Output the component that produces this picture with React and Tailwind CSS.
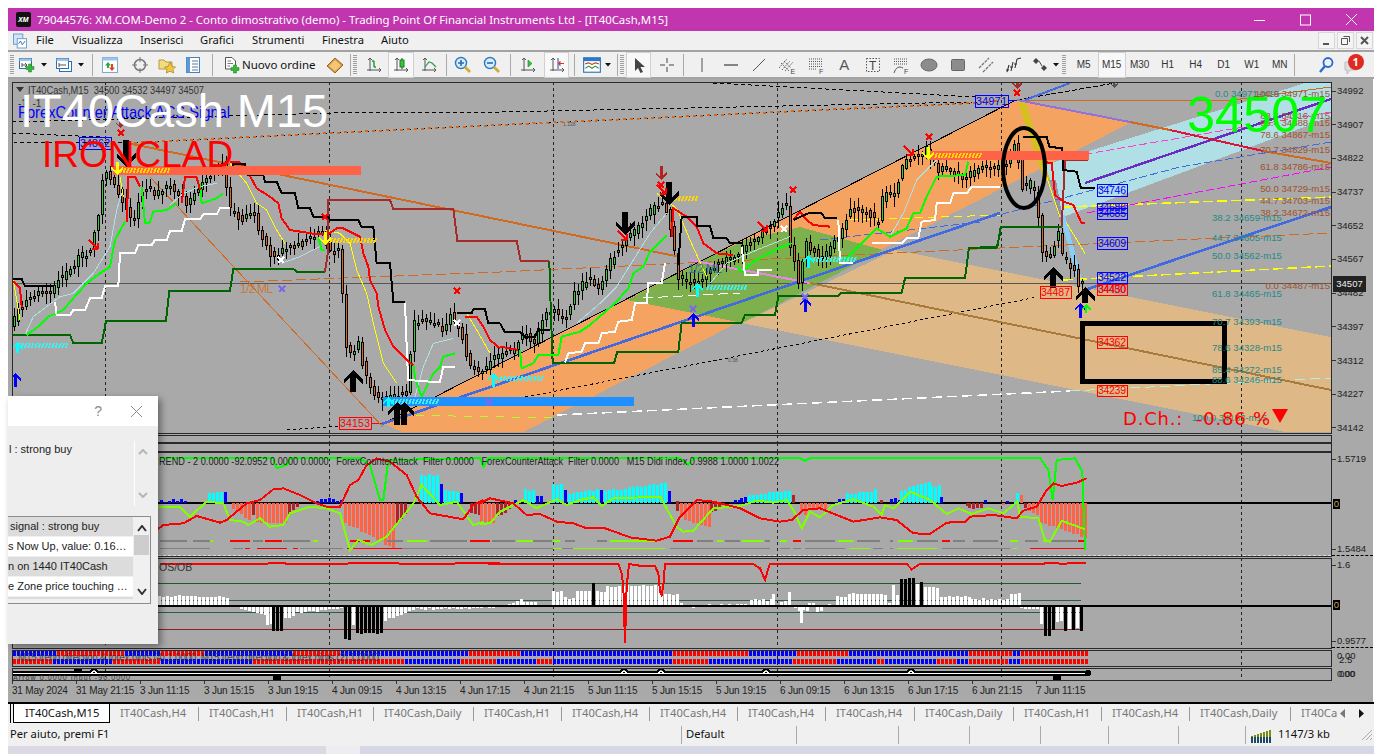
const rnd = (i) => {
  const v = Math.sin(i * 12.9898) * 43758.5453;
  return v - Math.floor(v);
};

// zoomed crop coordinates -> screen coordinates
const pts = (s, dx, dy) =>
  s.trim().split(/\s+/).map((p) => {
    const [x, y] = p.split(',');
    return [+x / 3 + dx, +y / 3 + dy];
  });
const z7 = (s) => pts(s, 0, 80);
const z8 = (s) => pts(s, 500, 80);
const z6 = (s) => pts(s, 980, 80);
const z3 = (s) => pts(s, 0, 390);
const z9 = (s) => pts(s, 480, 440);
const z10 = (s) => pts(s, 930, 440);
const str = (a) => a.map((p) => p.join(',')).join(' ');

const price = [
  [14, 330], [20, 313], [33, 297], [43, 293], [55, 290], [62, 280], [73, 270], [83, 257], [93, 252], [102, 213], [107, 170],
  [115, 180], [127, 203], [137, 220], [147, 187], [160, 193], [173, 183], [190, 203], [210, 180], [227, 160], [232, 207],
  [245, 220], [257, 213], [267, 243], [277, 260], [290, 247], [307, 243], [325, 230], [333, 250], [345, 253], [347, 340],
  [353, 357], [362, 343], [367, 367], [380, 400], [397, 397], [410, 393], [417, 323], [433, 320], [447, 330], [453, 313],
  [467, 340], [473, 367], [487, 370], [497, 357], [520, 350], [525, 330], [537, 343], [552, 310], [570, 317], [578, 293],
  [593, 277], [603, 287], [613, 263], [622, 250], [633, 233], [643, 227], [657, 207], [667, 203], [673, 220], [682, 277],
  [693, 283], [707, 277], [722, 262], [737, 257], [753, 243], [773, 227], [790, 203], [793, 240], [802, 280], [810, 243],
  [825, 260], [840, 240], [853, 210], [870, 210], [882, 223], [887, 193], [897, 197], [902, 180], [908, 160], [920, 157],
  [930, 150], [942, 170], [953, 170], [968, 180], [980, 170], [1000, 167], [1010, 163], [1020, 140], [1025, 187], [1037, 183],
  [1042, 217], [1045, 253], [1053, 257], [1062, 233], [1065, 253], [1077, 270], [1082, 283], [1088, 283],
];
const priceAt = (x) => {
  for (let i = 1; i < price.length; i++) {
    if (x <= price[i][0]) {
      const [a, b] = [price[i - 1], price[i]];
      return a[1] + ((b[1] - a[1]) * (x - a[0])) / (b[0] - a[0]);
    }
  }
  return 283;
};

const GRID = [105, 329, 553, 777, 1001, 1241];

const SANS = { fontFamily: '"Liberation Sans", Arial, sans-serif' };

function Line({ p, c, w = 1, d }) {
  return <polyline points={typeof p === 'string' ? p : str(p)} fill="none" stroke={c} strokeWidth={w} strokeDasharray={d} />;
}

function Plot({ y0, h, bg, children }) {
  return (
    <div className="h-full w-[1320px] shrink-0 border border-[#2a2a2a]">
      <svg className="block h-full w-full" viewBox={`13 ${y0 + 1} 1318 ${h - 2}`} preserveAspectRatio="none" shapeRendering="crispEdges" style={SANS}>
        {bg}
        {GRID.map((x) => (
          <line key={x} x1={x} x2={x} y1={y0} y2={y0 + h} stroke="#222" strokeDasharray="3 3" />
        ))}
        {children}
      </svg>
    </div>
  );
}

function Candles() {
  const out = [];
  for (let i = 0; i < 268; i++) {
    const x = 14 + 4 * i;
    const o = priceAt(x) + (rnd(i) - 0.5) * 7;
    const c = priceAt(x + 4) + (rnd(i + 300) - 0.5) * 7;
    const t = Math.min(o, c) - 2 - rnd(i + 600) * 9;
    const b = Math.max(o, c) + 2 + rnd(i + 900) * 9;
    out.push(
      <g key={i}>
        <line x1={x} x2={x} y1={t} y2={b} stroke="#000" />
        <rect x={x - 1} y={Math.min(o, c)} width="2" height={Math.max(2, Math.abs(o - c))} fill={c < o ? '#32cd32' : '#d2691e'} stroke="#000" />
      </g>
    );
  }
  return <g>{out}</g>;
}

function Arrow({ x, y, h, w, st, c, down }) {
  const s = down ? -1 : 1;
  const y0 = down ? y + h : y;
  const P = (dx, dy) => `${x + dx},${y0 + s * dy}`;
  const d = [
    P(0, 0), P(w / 2, w / 2), P(w / 2, w * 0.72), P(st / 2, w * 0.38), P(st / 2, h),
    P(-st / 2, h), P(-st / 2, w * 0.38), P(-w / 2, w * 0.72), P(-w / 2, w / 2),
  ].join(' ');
  return <polygon points={d} fill={c} />;
}

function Cross({ x, y, c, s = 3 }) {
  return <path d={`M${x - s} ${y - s}L${x + s} ${y + s}M${x + s} ${y - s}L${x - s} ${y + s}`} stroke={c} strokeWidth="2" fill="none" />;
}

function RedHit({ x, y }) {
  return <path d={`M${x - 9} ${y - 9}L${x} ${y}M${x} ${y}L${x} ${y - 6}M${x} ${y}L${x - 6} ${y}`} stroke="#f00" strokeWidth="1.6" fill="none" />;
}

function Hatch({ x1, x2, y, h, c }) {
  let d = '';
  for (let x = x1; x < x2; x += 3.4) d += `M${x} ${y + h}L${x + 2} ${y}`;
  return <path d={d} stroke={c} strokeWidth="1.7" fill="none" />;
}

function Box({ x, y, w, h, c, t }) {
  return (
    <g>
      <rect x={x} y={y} width={w} height={h} fill="none" stroke={c} />
      <text x={x + w / 2} y={y + h - 2} fontSize="10.5" fill={c} textAnchor="middle" textLength={w - 2} shapeRendering="auto">{t}</text>
    </g>
  );
}

const TEAL = [
  ['0.0 34971-m15', 1215, 97], ['38.2 34659-m15', 1212, 221], ['44.7 34605-m15', 1212, 241], ['50.0 34562-m15', 1212, 259],
  ['61.8 34465-m15', 1212, 297], ['70.7 34393-m15', 1212, 325], ['78.6 34328-m15', 1212, 351], ['85.4 34272-m15', 1212, 373],
  ['88.6 34246-m15', 1212, 383], ['100.0 34153-m15', 1192, 421],
];
const SIENNA = [
  ['100.0 34971-m15', 97], ['88.6 34916-m15', 119], ['85.4 34888-m15', 126], ['78.6 34867-m15', 138], ['70.7 34829-m15', 153],
  ['61.8 34786-m15', 170], ['50.0 34729-m15', 192], ['44.7 34703-m15', 204], ['38.2 34672-m15', 216], ['0.0 34487-m15', 289],
];

function MainChart() {
  const bg = (
    <g>
      <polygon points="1017,100 1132,122 523,432 402,432 382,423" fill="#f4a460" />
      <polygon points="895,250 1331,337 1331,432 1285,432 742,323" fill="#deb887" />
      <polygon points="627,300 700,262 745,240 800,227 883,250 742,323" fill="#7fb04e" />
      <polygon points="1305,83 1331,83 1331,117 1063,217 1045,165" fill="#b0e0e6" />
      <polygon points="1017,100 1025,100 1050,180 1044,180" fill="#d4c020" />
      <polygon points="1050,180 1056,180 1063,220 1060,222" fill="#9a8ea0" />
      <polygon points="1060,215 1065,215 1083,283 1078,283" fill="#87cefa" />
    </g>
  );
  return (
    <Plot y0={82} h={352} bg={bg}>
      <line x1="13" x2="1331" y1="283" y2="283" stroke="#555" />
      {/* dashed price lines */}
      <Line p="12,122 333,113 500,112 973,102" c="#000" d="4 3" />
      <Line p="713,83 977,97" c="#000" d="4 3" />
      <Line p="12,133 100,137" c="#000" d="4 3" />
      <Line p="13,142 127,143" c="#000" d="4 3" />
      <Line p="127,143 333,133 500,125 973,103 1000,101" c="#000" d="4 3" />
      <Line p="127,143 333,133 500,125 973,103 1000,101" c="#d2691e" d="3 4" w="2" />
      <Line p="287,430 339,426" c="#000" d="3 3" />
      <Line p="371,423 382,423" c="#f00" />
      <Line p="525,397 733,357 1037,297" c="#000" d="3 3" />
      <Line p="1017,100 1115,83" c="#000" d="5 2" />
      <Line p="1017,100 1233,100 1331,87" c="#d2691e" />
      <Line p="557,415 1070,391" c="#fff" d="10 5" w="1.5" />
      <Line p="1070,391 1331,378" c="#b0f0e0" d="10 5" />
      <Line p="400,415 557,418" c="#adff2f" d="8 8" />
      <Line p="643,298 740,293" c="#fff" d="10 5" />
      <Line p="240,282 500,272 1000,248 1331,233" c="#d2691e" d="10 4" />
      <Line p="1063,207 1331,197" c="#ffff00" d="10 4" w="1.5" />
      <Line p="1063,280 1331,266" c="#ffff00" d="10 4" w="1.5" />
      <Line p="1087,213 1331,167" c="#ff00ff" d="8 3" />
      <Line p="1063,158 1331,112" c="#ff40c0" d="8 3" />
      <Line p="980,220 1180,167 1331,142" c="#4169e1" d="8 3" />
      <Line p="820,240 980,222" c="#4169e1" d="8 3" />
      <Line p="850,220 1000,215" c="#ffff00" d="8 5" />
      {/* channels */}
      <Line p="382,424 1016,100" c="#000" />
      <Line p="150,177 383,427" c="#d2691e" />
      <Line p="382,424 1000,213" c="#4169e1" w="2.6" />
      <Line p="1025,100 1070,83" c="#4169e1" w="2" />
      <Line p="1085,290 1331,207" c="#4169e1" w="2.6" />
      <Line p="1085,183 1331,99" c="#6a2cc0" w="2.4" />
      <Line p="1017,100 1130,122" c="#9370db" w="2" />
      <Line p="1130,122 1170,130" c="#d2691e" w="2" />
      <Line p="1170,130 1263,151" c="#dc143c" w="2" />
      <Line p="1263,151 1331,163" c="#d2691e" w="2" />
      <Line p="127,143 680,257" c="#d2691e" w="2" />
      <Line p="690,260 810,283" c="#ee82ee" w="2" />
      <Line p="810,283 1331,390" c="#a87a3c" w="2" />

      <Candles />

      {/* thin moving averages */}
      <Line p={z7('40,600 50,660 60,720')} c="#ffff00" />
      <Line p={z7('360,290 370,350')} c="#ffff00" />
      <Line p={z7('690,250 740,310 770,370 800,390 830,450 855,490')} c="#ffff00" />
      <Line p={z7('975,450 1020,460 1050,490 1070,570 1100,640 1120,730 1150,850 1190,910')} c="#ffff00" />
      <Line p={z7('1400,700 1430,750 1470,820')} c="#ffff00" />
      <Line p={z8('470,340 530,385 570,480 620,590')} c="#ffff00" />
      <Line p={z6('200,290 240,410')} c="#ffff00" />
      <Line p={z6('260,430 315,520')} c="#ffff00" />
      <Line p={z7('75,765 100,710 140,680 180,650 220,640 280,580 330,500 350,390 365,340')} c="#b0e0e6" />
      <Line p={z7('510,375 550,340 600,320 650,310')} c="#b0e0e6" />
      <Line p={z7('845,550 900,530 960,500')} c="#b0e0e6" />
      <Line p={z7('1245,950 1270,860 1300,790 1360,775')} c="#b0e0e6" />
      <Line p={z8('230,730 300,670 350,620 400,540 450,460 500,400')} c="#b0e0e6" />
      <Line p={z8('630,610 680,550 770,510 870,470')} c="#b0e0e6" />
      <Line p={z8('1170,470 1210,400 1250,300 1310,240')} c="#b0e0e6" />

      {/* step lines */}
      <Line p={z7('40,765 210,765 220,790 305,790 318,723 498,723 508,632 690,632 700,567 880,567 890,575 975,575')} c="#006400" w="2" />
      <Line p={z8('148,543 150,620 158,850 342,850 352,815 535,815 545,728 725,728 735,705 825,705 835,648 1015,648 1025,638 1205,638 1215,595 1395,595 1407,503 1490,503 1500,460')} c="#006400" w="2" />
      <Line p={z6('0,500 52,500 62,440 245,440')} c="#006400" w="2" />
      <Line p={z7('975,575 985,510 985,360 1170,360 1180,387 1360,387 1372,482 1500,482')} c="#a52a2a" w="2" />
      <Line p={z8('0,482 50,482 62,543 148,543')} c="#a52a2a" w="2" />
      <Line p={z6('245,440 255,240 325,240')} c="#a52a2a" w="2" />
      <Line p={z7('80,765 115,740 145,710 190,690 220,655 260,610 300,580 330,560 345,480 375,425')} c="#00ff00" w="2" />
      <Line p={z7('425,320 435,430 448,430 460,395 500,390 530,370')} c="#00ff00" w="2" />
      <Line p={z7('600,310 605,370 650,355 670,340')} c="#00ff00" w="2" />
      <Line p={z7('955,470 965,510 975,510')} c="#00ff00" w="2" />
      <Line p={z7('1240,855 1245,895 1265,950 1280,920 1300,880 1320,860 1330,830 1365,820')} c="#00ff00" w="2" />
      <Line p={z8('60,810 65,865 100,850 115,825 175,825 185,770 240,755 270,735 310,700 345,670 385,625 400,580 430,560 450,515 500,465')} c="#00ff00" w="2" />
      <Line p={z8('710,560 725,575 760,545 835,505 875,490')} c="#00ff00" w="2" />
      <Line p={z8('1030,545 1085,490 1130,445 1170,470 1220,445 1240,400 1260,400 1280,350 1310,290 1395,285 1405,245')} c="#00ff00" w="2" />
      <Line p={z7('165,665 170,705 210,705 220,690 255,690 270,655 305,655 315,618 355,618 360,520 405,520 415,495 455,495 465,480 500,480 510,453 545,453 555,418 600,418 610,403 650,403 660,385 690,385')} c="#fff" w="2" />
      <Line p={z7('1215,668 1222,850 1225,900 1290,905 1320,905 1330,860 1365,860')} c="#fff" w="2" />
      <Line p={z8('195,848 205,820 245,815 255,790 295,790 305,760 345,755 355,725 395,720 405,670 440,670 445,610 485,610 495,550')} c="#fff" w="2" />
      <Line p={z8('725,500 735,585 775,585 775,570 815,570')} c="#fff" w="2" />
      <Line p={z8('1015,420 1020,550 1060,550')} c="#fff" w="2" />
      <Line p={z8('1115,490 1205,490 1220,475 1255,475 1265,425 1305,420 1310,370 1350,370 1360,340 1400,340 1415,320 1500,320')} c="#fff" w="2" />
      <Line p={z6('0,320 55,320')} c="#fff" w="2" />
      <Line p={z7('40,605 60,625 65,680')} c="#f00" w="2" />
      <Line p={z7('380,425 385,290 405,290 420,320')} c="#f00" w="2" />
      <Line p={z7('545,370 555,292 590,292 600,330')} c="#f00" w="2" />
      <Line p={z7('690,245 715,245 740,270 770,325 810,350 835,370 845,415 870,450 945,462 985,462 1010,445 1030,445 1080,470 1090,520 1105,560 1110,600 1130,640 1135,680 1155,750 1180,800 1225,845 1240,855')} c="#f00" w="2" />
      <Line p={z7('1395,710 1430,710 1450,740 1470,780 1500,805')} c="#f00" w="2" />
      <Line p={z8('0,800 55,810')} c="#f00" w="2" />
      <Line p={z8('515,470 520,385 560,410 590,440 610,490 650,520 700,525')} c="#f00" w="2" />
      <Line p={z8('880,420 900,395 920,420 940,435 990,440')} c="#f00" w="2" />
      <Line p={z6('190,245 215,250 225,345 250,365 280,375 305,430 315,430')} c="#f00" w="2" />
      <Line p={z7('40,597 65,597 75,618 160,618')} c="#000" w="2" />
      <Line p={z7('690,280 700,252 735,252 745,285 790,285 795,305 830,305 845,340 885,340 895,385 930,385 940,410 985,410 990,420 1075,420 1085,442 1120,442 1130,550 1170,550 1180,665 1215,665')} c="#000" w="2" />
      <Line p={z7('1370,700 1415,700 1420,688 1455,688 1465,730 1500,730')} c="#000" w="2" />
      <Line p={z8('0,730 15,757 60,757 75,770 105,770 115,750 150,750')} c="#000" w="2" />
      <Line p={z8('535,555 545,410 590,410 590,438 630,438 640,475 680,475 690,490 725,490')} c="#000" w="2" />
      <Line p={z8('880,420 925,400 965,400 975,415 1010,415')} c="#000" w="2" />
      <Line p={z6('130,170 200,170 208,200 245,205 250,270 290,275 303,325 345,325')} c="#000" w="2" />

      {/* signal bars */}
      <rect x="113" y="166" width="248" height="9" fill="#ff6347" />
      <rect x="927" y="151" width="162" height="9" fill="#ff6347" />
      <rect x="383" y="397" width="251" height="9" fill="#1e90ff" />
      <Hatch x1={120} x2={168} y={168} h={5} c="#ffd700" />
      <Hatch x1={935} x2={980} y={153} h={5} c="#ffd700" />
      <Hatch x1={330} x2={376} y={238} h={5} c="#ffd700" />
      <Hatch x1={675} x2={697} y={196} h={5} c="#ffd700" />
      <Hatch x1={18} x2={68} y={343} h={5} c="#40f0f0" />
      <Hatch x1={392} x2={438} y={399} h={5} c="#40f0f0" />
      <Hatch x1={500} x2={543} y={376} h={5} c="#40f0f0" />
      <Hatch x1={707} x2={747} y={285} h={5} c="#40f0f0" />
      <Hatch x1={813} x2={857} y={257} h={5} c="#40f0f0" />

      {/* arrows and marks */}
      <Arrow x={353} y={370} h={22} w={19} st={6} c="#000" />
      <Arrow x={397} y={402} h={23} w={19} st={6} c="#000" />
      <Arrow x={404} y={402} h={23} w={19} st={6} c="#000" />
      <Arrow x={1053} y={267} h={21} w={19} st={6} c="#000" />
      <Arrow x={1085} y={287} h={16} w={19} st={6} c="#000" />
      <Arrow x={126} y={140} h={27} w={19} st={6} c="#000" down />
      <Arrow x={625} y={212} h={23} w={19} st={6} c="#000" down />
      <Arrow x={669} y={182} h={23} w={19} st={6} c="#000" down />
      <Arrow x={693} y={313} h={14} w={11} st={3} c="#0000ff" />
      <Arrow x={805} y={298} h={14} w={11} st={3} c="#0000ff" />
      <Arrow x={15} y={373} h={14} w={11} st={3} c="#0000ff" />
      <Arrow x={1080} y={303} h={15} w={11} st={3} c="#0000ff" />
      <Arrow x={1086} y={304} h={9} w={9} st={2} c="#00ff00" />
      <Arrow x={17} y={342} h={11} w={11} st={3} c="#00ffff" />
      <Arrow x={388} y={397} h={10} w={11} st={3} c="#00ffff" />
      <Arrow x={493} y={373} h={14} w={11} st={3} c="#00ffff" />
      <Arrow x={697} y={283} h={14} w={11} st={3} c="#00ffff" />
      <Arrow x={808} y={255} h={13} w={11} st={3} c="#00ffff" />
      <Arrow x={117} y={162} h={13} w={12} st={3} c="#ffff00" down />
      <Arrow x={325} y={232} h={13} w={12} st={3} c="#ffff00" down />
      <Arrow x={928} y={147} h={13} w={12} st={3} c="#ffff00" down />
      <Arrow x={661} y={166} h={14} w={11} st={3} c="#b22222" down />
      <Arrow x={120} y={120} h={8} w={8} st={3} c="#a52a2a" down />
      <Arrow x={1017} y={83} h={6} w={10} st={3} c="#a52a2a" down />
      <Arrow x={1114} y={83} h={5} w={8} st={2} c="#555" down />
      <Cross x={121} y={133} c="#f00" />
      <Cross x={325} y={217} c="#f00" />
      <Cross x={457} y={291} c="#f00" />
      <Cross x={661} y={185} c="#f00" />
      <Cross x={793} y={190} c="#f00" />
      <Cross x={929} y={137} c="#f00" />
      <Cross x={1017} y={93} c="#f00" />
      <Cross x={281} y={260} c="#fff" />
      <Cross x={457} y={323} c="#fff" />
      <Cross x={784} y={229} c="#fff" />
      <Cross x={282} y={289} c="#7b68ee" />
      <Cross x={489} y={402} c="#7b68ee" />
      <Cross x={693} y={309} c="#7b68ee" />
      <Cross x={805} y={297} c="#7b68ee" />
      <RedHit x={98} y={249} />
      <RedHit x={627} y={240} />
      <RedHit x={666} y={194} />
      <RedHit x={767} y={231} />
      <RedHit x={913} y={155} />

      <ellipse cx="1024" cy="168" rx="21" ry="40" fill="none" stroke="#000" strokeWidth="4" shapeRendering="auto" />
      <rect x="1082.5" y="323.5" width="142" height="58" fill="none" stroke="#000" strokeWidth="5" />

      <Box x={79} y={137} w={32} h={12} c="#0000ff" t="34862" />
      <Box x={975} y={95} w={33} h={12} c="#0000ff" t="34971" />
      <line x1="1008" x2="1017" y1="100" y2="100" stroke="#0000ff" />
      <Box x={1097} y={184} w={30} h={12} c="#0000ff" t="34746" />
      <Box x={1097} y={203} w={30} h={10} c="#0000ff" t="34686" />
      <Box x={1097} y={208} w={30} h={11} c="#0000ff" t="34685" />
      <Box x={1097} y={237} w={30} h={12} c="#0000ff" t="34609" />
      <Box x={1097} y={272} w={30} h={11} c="#0000ff" t="34522" />
      <Box x={1040} y={286} w={31} h={12} c="#f00" t="34487" />
      <Box x={1097} y={284} w={30} h={11} c="#f00" t="34450" />
      <Box x={1097} y={284} w={30} h={11} c="#f00" t="34430" />
      <Box x={1097} y={336} w={30} h={12} c="#f00" t="34362" />
      <Box x={1097} y={385} w={30} h={11} c="#f00" t="34239" />
      <Box x={339} y={417} w={32} h={12} c="#f00" t="34153" />

      <g shapeRendering="auto">
        {TEAL.map(([t, x, y]) => (
          <text key={t} x={x} y={y} fontSize="9.6" fill="#1f8a8a">{t}</text>
        ))}
        {SIENNA.map(([t, y]) => (
          <text key={t} x={1330} y={y} fontSize="9.6" fill="#a0522d" textAnchor="end">{t}</text>
        ))}
        <text x="240" y="293" fontSize="12" fill="#c87a3c" textLength="33">1/2 ML</text>
        <text x="688" y="273" fontSize="12" fill="#3a6a9a" textLength="34">1/2 ML</text>
        <text x="563" y="126" fontSize="5" fill="#555">1.128</text>
        <text x="728" y="362" fontSize="5" fill="#555">0.38</text>
        <polygon points="16,87 24,87 20,92" fill="#333" />
        <text x="28" y="94" fontSize="10" fill="#333" textLength="176" lengthAdjust="spacingAndGlyphs" xmlSpace="preserve">IT40Cash,M15  34500 34532 34497 34507</text>
        <text x="18" y="107" fontSize="10" fill="#333" xmlSpace="preserve">-1  -1</text>
        <text x="18" y="118" fontSize="17" fill="#0000ff" textLength="212" lengthAdjust="spacingAndGlyphs">ForexCounter Attack ACS Signal</text>
        <text x="20" y="127" fontSize="47" fill="#fff">IT40Cash M15</text>
        <text x="42" y="167" fontSize="37" fill="#f00">IRONCLAD</text>
        <text x="1187" y="132" fontSize="50.5" fill="#00ff00">34507</text>
        <text x="1123" y="425" fontSize="18" fill="#f00" textLength="147" xmlSpace="preserve" style={{ fontFamily: '"DejaVu Sans", sans-serif' }}>D.Ch.:  -0.86 %</text>
        <polygon points="1272,409 1288,409 1280,423" fill="#f00" />
      </g>
    </Plot>
  );
}

const HIST = [
  [160, 170, 2, 2, '#0000ff'], [172, 186, 3, 3, '#0000ff'], [208, 224, 9, 11, '#00ffff'], [224, 228, 11, 11, '#0000ff'],
  [232, 252, -6, -20, '#ff6347'], [252, 256, -12, -12, '#b22222'], [256, 288, -20, -20, '#ff6347'], [288, 300, -10, -3, '#b22222'],
  [316, 332, 3, 5, '#0000ff'], [332, 342, 3, 2, '#0000ff'], [344, 396, -20, -47, '#ff6347'], [396, 408, -20, -6, '#b22222'],
  [420, 440, 28, 28, '#00ffff'], [440, 444, 20, 20, '#0000ff'], [444, 460, 12, 12, '#00ffff'], [460, 464, 10, 10, '#0000ff'],
  [470, 480, -10, -12, '#b22222'], [480, 496, -20, -20, '#ff6347'], [496, 512, -14, -5, '#b22222'], [514, 522, 2, 4, '#0000ff'],
  [524, 534, 13, 14, '#00ffff'], [536, 542, 7, 7, '#0000ff'], [552, 564, 18, 18, '#00ffff'], [564, 568, 12, 12, '#0000ff'],
  [568, 600, 10, 14, '#00ffff'], [600, 604, 13, 13, '#0000ff'], [604, 668, 12, 20, '#00ffff'], [668, 672, 12, 12, '#0000ff'],
  [676, 680, 2, 2, '#b22222'], [676, 680, -8, -8, '#b22222'], [680, 710, -15, -26, '#ff6347'], [710, 720, -10, -4, '#b22222'],
  [726, 740, 1, 3, '#0000ff'], [740, 748, 4, 6, '#0000ff'], [748, 790, 8, 13, '#00ffff'], [792, 796, 8, 8, '#b22222'],
  [800, 808, -6, -18, '#ff6347'], [808, 826, -4, -6, '#ff6347'], [834, 846, 2, 5, '#0000ff'], [846, 876, 9, 13, '#00ffff'],
  [880, 884, 3, 3, '#b22222'], [890, 900, 4, 4, '#0000ff'], [900, 930, 12, 22, '#00ffff'], [930, 940, 17, 17, '#00ffff'],
  [940, 944, 6, 6, '#0000ff'], [966, 970, -3, -3, '#b22222'], [968, 982, -5, -5, '#b22222'], [984, 988, 3, 3, '#0000ff'],
  [1002, 1004, -1, -1, '#ff6347'], [1006, 1010, 2, 2, '#0000ff'], [1014, 1016, 3, 3, '#00ffff'], [1016, 1020, 10, 10, '#00ffff'],
  [1020, 1024, 7, 7, '#ff6347'], [1024, 1028, -5, -5, '#b22222'], [1028, 1040, -8, -14, '#ff6347'], [1040, 1088, -20, -36, '#ff6347'],
];

function Histogram({ data, zero, w = 3 }) {
  const out = [];
  data.forEach(([a, b, h1, h2, c], n) => {
    for (let x = a; x < b; x += 4) {
      const h = h1 + ((h2 - h1) * (x - a)) / Math.max(1, b - a) + (rnd(x) - 0.5) * 2;
      out.push(<rect key={`${n}-${x}`} x={x} y={h > 0 ? zero - h : zero} width={w} height={Math.abs(h)} fill={c} />);
    }
  });
  return <g>{out}</g>;
}

const dashes = (y, list) =>
  list.map(([a, b, c], i) => <rect key={`${y}-${i}`} x={a} y={y} width={b - a} height="1.6" fill={c} />);

const GR = '#808080';
const LI = '#7fff00';
const RE = '#f00';
const ROW1 = [
  [160, 187, GR], [193, 210, GR], [210, 213, LI], [230, 250, RE], [253, 263, GR], [265, 282, RE], [283, 310, GR], [313, 318, LI],
  [350, 370, RE], [387, 403, GR], [407, 427, LI], [430, 467, GR], [470, 490, RE], [492, 515, GR], [517, 533, LI], [533, 552, GR],
  [553, 560, LI], [565, 575, GR], [597, 607, GR], [610, 657, LI], [673, 693, RE], [697, 713, GR], [717, 723, LI], [725, 740, GR],
  [742, 763, LI], [765, 770, GR], [780, 787, LI], [793, 801, RE], [805, 835, GR], [838, 853, LI], [857, 880, GR], [890, 893, GR],
  [898, 913, LI], [917, 930, GR], [930, 938, GR], [942, 950, RE], [953, 965, GR], [973, 998, GR], [1010, 1018, LI], [1025, 1038, GR],
  [1043, 1050, LI], [1050, 1077, GR], [1078, 1086, RE],
];
const ROW2 = [
  [160, 210, GR], [233, 243, GR], [245, 250, RE], [257, 287, RE], [293, 298, RE], [300, 343, GR], [347, 402, RE], [402, 553, GR],
  [553, 562, LI], [562, 573, GR], [573, 665, LI], [670, 770, GR], [780, 790, GR], [793, 801, GR], [805, 845, GR], [850, 870, LI],
  [873, 883, GR], [890, 893, GR], [897, 930, LI], [930, 937, LI], [942, 1010, GR], [1013, 1017, LI], [1030, 1086, RE],
];

function DidiPanel() {
  return (
    <Plot y0={452} h={105}>
      <line x1="13" x2="1331" y1="503" y2="503" stroke="#000" strokeWidth="2.5" />
      <line x1="13" x2="1331" y1="555" y2="555" stroke="#ddd" strokeDasharray="3 2" />
      <Histogram data={HIST} zero={503} />
      {dashes(540, ROW1)}
      {dashes(547.5, ROW2)}
      <Line p={z3('480,205 820,205 830,235 860,225 870,205 1080,205 1110,225 1140,330 1150,330 1165,210 1440,205 1450,230 1465,205 1500,205')} c="#00ff00" w="2" />
      <Line p={z9('60,55 600,55 625,75 640,55 960,55 975,62 990,55 1350,55')} c="#00ff00" w="2" />
      <Line p={z10('0,53 330,53 355,90 368,180 380,60 435,55 457,95 465,330')} c="#00ff00" w="2" />
      <Line p={z3('470,350 540,350 570,380 620,335 670,340 690,390 730,395 745,405 780,385 810,410 850,405 870,370 930,350 980,355 1020,370 1050,480 1075,450 1115,465 1160,440 1240,340 1265,285 1320,345 1370,335 1420,405 1450,395')} c="#7fff00" w="2" />
      <Line p={z9('0,252 30,250 60,215 130,180 170,205 230,178 260,195 300,180 340,172 365,198 400,175 540,170 590,260 610,275 640,272 700,205 780,198 830,182 880,188 920,180 940,210 965,265 990,215 1020,232 1060,195 1120,178 1180,200 1205,225 1215,195 1240,205 1290,155 1350,180')} c="#7fff00" w="2" />
      <Line p={z10('0,180 50,222 85,205 125,222 175,205 220,220 262,185 270,230 325,235 345,300 360,305 395,242 465,268')} c="#7fff00" w="2" />
      <Line p={z3('470,420 490,405 550,400 590,378 660,398 680,390 740,340 780,330 820,298 850,295 900,315 950,340 980,350 1020,350 1050,285 1075,270 1100,225 1130,205 1170,215 1220,255 1250,320 1290,370 1390,388 1420,345 1450,330')} c="#f00" w="2" />
      <Line p={z9('0,190 30,175 100,190 140,225 180,222 230,245 280,250 320,265 370,263 450,292 530,302 570,290 600,230 650,180 700,185 780,205 840,235 900,245 935,240 970,210 1020,205 1120,245 1200,232 1250,240 1300,280 1350,282')} c="#f00" w="2" />
      <Line p={z10('0,282 50,248 105,245 120,230 190,225 260,235 280,212 320,200 350,150 370,130 395,138 440,128 470,115')} c="#f00" w="2" />
      <text x="159" y="465" fontSize="10.5" fill="#222" textLength="620" lengthAdjust="spacingAndGlyphs" xmlSpace="preserve" shapeRendering="auto">REND - 2 0.0000 -92.0952 0.0000 0.0000   ForexCounterAttack  Filter 0.0000   ForexCounterAttack  Filter 0.0000   M15 Didi index 0.9988 1.0000 1.0022</text>
    </Plot>
  );
}

const W = '#fff';
const K = '#000';
const OSOB = [
  [158, 228, 10, 9, W], [232, 236, 1, 1, W], [240, 266, -3, -10, W], [266, 272, -18, -18, W], [272, 284, -25, -25, K], [284, 296, -12, -10, W],
  [296, 344, -7, -2, W], [344, 352, -33, -33, K], [352, 356, -20, -20, W], [356, 384, -28, -28, K], [384, 416, -14, -3, W], [416, 500, -3, -2, W],
  [500, 512, 1, 1, W], [512, 522, 3, 8, W], [522, 536, 4, 4, W], [552, 564, 14, 14, W], [564, 576, 8, 8, W], [576, 590, 15, 15, W],
  [592, 596, 24, 24, K], [596, 606, 14, 14, W], [606, 660, 20, 20, W], [660, 680, 12, 12, W], [680, 686, 2, 2, W], [692, 702, -2, -2, W],
  [708, 748, 1, 1, W], [750, 772, 6, 6, W], [772, 776, 12, 12, W], [780, 788, 5, 5, W], [788, 792, 15, 15, W], [794, 808, -3, -6, W], [800, 804, -16, -16, W],
  [808, 816, 3, 3, W], [816, 824, -6, -6, W], [828, 836, 2, 2, W], [836, 848, 9, 9, W], [848, 888, 12, 12, W], [888, 892, 3, 3, W], [892, 896, 21, 21, W],
  [896, 900, 11, 11, W], [900, 904, 21, 21, W], [900, 916, 27, 27, K], [916, 920, 21, 21, W], [920, 924, 24, 24, K], [924, 940, 19, 18, W],
  [940, 970, 9, 9, W], [970, 1010, 7, 7, W], [1010, 1020, 13, 13, W], [1020, 1040, -3, -3, W], [1040, 1044, -18, -18, W], [1044, 1052, -30, -30, K],
  [1052, 1056, -25, -25, K], [1056, 1064, -16, -16, W], [1064, 1068, -25, -25, K], [1068, 1072, -23, -23, W], [1072, 1076, -24, -24, K],
  [1076, 1080, -23, -23, W], [1080, 1084, -24, -24, K],
];

function OsobPanel() {
  return (
    <Plot y0={558} h={91}>
      <Line p="13,583 1081,583" c="#1e5a30" />
      <Line p="13,600 1081,600" c="#2a5a50" />
      <Line p="13,612 1081,612" c="#2a5a50" />
      <Line p="13,629 1081,629" c="#8b2020" />
      <Histogram data={OSOB} zero={606} />
      <line x1="13" x2="1331" y1="606" y2="606" stroke="#000" strokeWidth="1.5" />
      <line x1="13" x2="1331" y1="648" y2="648" stroke="#ddd" strokeDasharray="3 2" />
      <Line p={z3('480,522 800,522 810,518 850,518 860,522 1040,522 1050,518 1190,518 1200,522 1420,520 1450,518 1500,520')} c="#f00" w="2" />
      <Line p={z9('0,368 40,372 415,372 425,400 430,440 435,610 440,440 447,372 485,378 525,378 535,400 540,455 545,465 550,435 555,372 820,372 840,385 855,420 865,385 870,372 1120,372 1280,372 1295,388 1320,372 1350,372')} c="#f00" w="2" />
      <Line p={z10('0,372 340,372 350,368 380,368 390,372 420,370 468,369')} c="#f00" w="2" />
      <text x="159" y="571" fontSize="10.5" fill="#333" shapeRendering="auto">OS/OB</text>
    </Plot>
  );
}

const seg1 = [
  [13, 56, 'b'], [56, 125, 'r'], [125, 160, 'b'], [160, 205, 'r'], [205, 290, 'b'], [290, 340, 'r'], [340, 415, 'b'], [415, 466, 'b'], [466, 520, 'r'],
  [520, 672, 'b'], [672, 747, 'r'], [747, 796, 'b'], [796, 847, 'r'], [847, 968, 'b'], [968, 1012, 'r'], [1012, 1019, 'b'], [1019, 1088, 'r'],
];
const seg2 = [
  [13, 50, 'r'], [50, 110, 'b'], [110, 160, 'r'], [160, 250, 'b'], [250, 290, 'r'], [290, 404, 'r'], [404, 460, 'b'], [460, 495, 'r'], [495, 536, 'b'],
  [536, 551, 'r'], [551, 672, 'b'], [672, 708, 'r'], [708, 791, 'b'], [791, 836, 'r'], [836, 875, 'b'], [875, 884, 'r'], [884, 935, 'b'], [935, 955, 'r'],
  [955, 968, 'b'], [968, 1008, 'r'], [1008, 1019, 'b'], [1019, 1088, 'r'],
];

function TrendRow({ segs, y }) {
  const cells = [];
  for (let x = 13; x < 1087; x += 4) {
    const s = segs.find((q) => x >= q[0] && x < q[1]);
    cells.push(<rect key={x} x={x} y={y} width="3.4" height="5" fill={s && s[2] === 'r' ? '#f00' : '#0000ff'} />);
  }
  return <g>{cells}</g>;
}

function Chevron({ x }) {
  return (
    <g>
      <path d={`M${x - 5} 673L${x - 1} 669L${x + 1} 669L${x + 5} 673`} stroke="#000" strokeWidth="2" fill="none" />
      <path d={`M${x - 3} 673L${x} 671L${x + 3} 673`} stroke="#fff" fill="none" />
    </g>
  );
}

function Axis({ children, cls }) {
  return <div className={`relative flex h-full w-[41px] flex-col text-[9.5px] leading-[12px] text-[#222] ${cls || ''}`}>{children}</div>;
}

function Tick({ t }) {
  return (
    <div className="flex h-[12px] items-center">
      <span className="h-px w-[4px] bg-[#333]" />
      <span className="ml-[1px]">{t}</span>
    </div>
  );
}

const TIMES = [
  '31 May 2024', '31 May 21:15', '3 Jun 11:15', '3 Jun 15:15', '3 Jun 19:15', '4 Jun 09:15', '4 Jun 13:15', '4 Jun 17:15', '4 Jun 21:15',
  '5 Jun 11:15', '5 Jun 15:15', '5 Jun 19:15', '6 Jun 09:15', '6 Jun 13:15', '6 Jun 17:15', '6 Jun 21:15', '7 Jun 11:15',
];
const PRICES = ['34992', '34907', '34822', '34737', '34652', '34567', '34482', '34397', '34312', '34227', '34142'];

function Dialog() {
  const rows = [
    ['signal : strong buy', 'bg-[#dcdcdc]', 'pl-[2px]'],
    ['s Now Up, value: 0.16…', 'bg-white', ''],
    ['n on 1440 IT40Cash', 'bg-[#dcdcdc]', ''],
    ['e Zone price touching …', 'bg-white', ''],
  ];
  return (
    <div className="absolute left-0 top-[317px] flex h-[248px] w-[150px] flex-col bg-[#eeeeee] text-[11px] text-[#222] shadow-[3px_3px_7px_rgba(0,0,0,0.4)]">
      <div className="flex h-[30px] shrink-0 items-center justify-end gap-[28px] bg-white pr-[15px] text-[#8a8a8a]">
        <span className="text-[14px]">?</span>
        <svg width="13" height="13" viewBox="0 0 13 13"><path d="M1 1L12 12M12 1L1 12" stroke="#8a8a8a" /></svg>
      </div>
      <div className="flex h-[90px] shrink-0 pt-[15px]">
        <span className="w-[126px] whitespace-nowrap pl-[1px]">l : strong buy</span>
        <div className="flex h-[65px] w-[17px] flex-col items-center justify-between border-l border-white py-[8px]">
          <svg width="10" height="6" viewBox="0 0 10 6"><path d="M1 5L5 1L9 5" stroke="#b5b5b5" strokeWidth="2" fill="none" /></svg>
          <svg width="10" height="6" viewBox="0 0 10 6"><path d="M1 1L5 5L9 1" stroke="#b5b5b5" strokeWidth="2" fill="none" /></svg>
        </div>
      </div>
      <div className="flex h-[88px] w-[143px] shrink-0 border-y border-r border-[#8c8c8c] bg-white">
        <div className="flex w-[125px] flex-col gap-[1px] overflow-hidden bg-[#f0f0f0]">
          {rows.map(([t, bg, pad]) => (
            <div key={t} className={`flex h-[19px] shrink-0 items-center whitespace-nowrap ${bg} ${pad}`}>{t}</div>
          ))}
          <div className="h-[2px] shrink-0 bg-[#dcdcdc]" />
        </div>
        <div className="relative flex w-[17px] flex-col items-center justify-between bg-[#f0f0f0] py-[8px]">
          <svg width="10" height="7" viewBox="0 0 10 7"><path d="M1 6L5 1L9 6" stroke="#333" strokeWidth="2" fill="none" /></svg>
          <div className="absolute left-[1px] top-[18px] h-[20px] w-[15px] bg-[#cdcdcd]" />
          <svg width="10" height="7" viewBox="0 0 10 7"><path d="M1 1L5 6L9 1" stroke="#333" strokeWidth="2" fill="none" /></svg>
        </div>
      </div>
    </div>
  );
}

const BLUE = '#2a6fb0';
const AX = (
  <path d="M5 2V15M3 4L5 2L7 4M2 14H16M14 12L16 14L14 16" stroke="#555" fill="none" />
);

function Slot({ w, children, pressed }) {
  return (
    <div className={`flex h-[26px] shrink-0 items-center justify-center ${w} ${pressed ? 'bg-[#f8f8f8] shadow-[inset_0_0_0_1px_#d0d0d0]' : ''}`}>
      {children}
    </div>
  );
}

function I({ children, s = 18 }) {
  return <svg width={s} height={s} viewBox="0 0 18 18">{children}</svg>;
}

const Caret = () => <svg width="6" height="4" viewBox="0 0 6 4"><path d="M0 0H6L3 3.5Z" fill="#111" /></svg>;
const Sep = () => <div className="h-[22px] w-px shrink-0 bg-[#a9a9a9]" />;
const Grip = ({ w }) => (
  <div className={`flex h-[26px] shrink-0 items-center justify-center ${w}`}>
    <div className="h-[20px] w-[4px] bg-[repeating-linear-gradient(#a0a0a0_0_1px,transparent_1px_2px)]" />
  </div>
);
const Plus = ({ x, y }) => <path d={`M${x + 2.5} ${y}h3v2.5h2.5v3h-2.5v2.5h-3v-2.5h-2.5v-3h2.5z`} fill="#35b83a" stroke="#1a7a20" strokeWidth="0.5" />;

function Toolbar() {
  return (
    <div className="flex h-[27px] items-center border-b-2 border-[#a3a3a3] bg-[#f0f0f0]">
      <Grip w="w-[8px]" />
      <Slot w="w-[21px]"><I>
        <rect x="1.5" y="2.5" width="12" height="10" fill="#fff" stroke={BLUE} /><rect x="1.5" y="2.5" width="12" height="2.5" fill="#9cc4e8" />
        <path d="M4 7V11M4 9H9M7 7L9 9L7 11" stroke="#555" fill="none" /><Plus x={8} y={8} />
      </I></Slot>
      <Slot w="w-[13px]"><Caret /></Slot>
      <Slot w="w-[28px]"><I>
        <rect x="4.5" y="5.5" width="12" height="10" fill="#fff" stroke={BLUE} /><rect x="1.5" y="2.5" width="12" height="10" fill="#fff" stroke={BLUE} />
        <rect x="1.5" y="2.5" width="12" height="2.5" fill="#9cc4e8" /><path d="M4 7V11M4 9H11" stroke="#555" fill="none" />
      </I></Slot>
      <Slot w="w-[6px]"><Caret /></Slot>
      <div className="w-[8px] shrink-0" />
      <Sep />
      <Slot w="w-[34px]"><I>
        <rect x="1.5" y="1.5" width="15" height="15" fill="#fff" stroke="#7fa8cc" /><rect x="1.5" y="1.5" width="15" height="3" fill="#9cc4e8" />
        <path d="M7 6L4 9.5H6V12H8V9.5H10Z" fill="#2aa83a" /><path d="M11 15L14 11.5H12V8H10V11.5H8Z" fill="#d8432a" />
      </I></Slot>
      <Slot w="w-[26px]"><I>
        <circle cx="9" cy="9" r="5.5" fill="none" stroke="#777" strokeWidth="1.5" /><path d="M9 1V6M9 12V17M1 9H6M12 9H17" stroke="#777" />
      </I></Slot>
      <Slot w="w-[27px]"><I>
        <path d="M1 4H6L8 6H14V13H1Z" fill="#f2dc80" stroke="#b59a40" /><path d="M12 6L14 10.5L17.5 11L15 13.5L15.7 17L12 15.2L8.3 17L9 13.5L6.5 11L10 10.5Z" fill="#f0c840" stroke="#a08020" strokeWidth="0.7" />
      </I></Slot>
      <Slot w="w-[26px]"><I>
        <rect x="2.5" y="1.5" width="13" height="15" fill="#fff" stroke="#4a80b8" /><rect x="2.5" y="1.5" width="3.5" height="15" fill="#5a9ad8" />
        <path d="M8 5H14M8 8H14M8 11H14M8 14H14" stroke="#5a7a9a" />
      </I></Slot>
      <div className="w-[6px] shrink-0" />
      <Sep />
      <Slot w="w-[29px]"><div className="ml-[9px]"><I>
        <path d="M2.5 1.5H9L12.5 5V13H2.5Z" fill="#fff" stroke="#555" /><path d="M4.5 5H8M4.5 7.5H10M4.5 10H7" stroke="#777" /><Plus x={8} y={9} />
      </I></div></Slot>
      <div className="flex h-[26px] w-[78px] shrink-0 items-center text-[11.5px] leading-none text-[#111]">Nuovo ordine</div>
      <Slot w="w-[30px]"><I>
        <path d="M1 10L9 2L17 9L9 17Z" fill="#d89a40" stroke="#96641a" /><path d="M3 10L9 4L15 9.5L9 15Z" fill="#f2c878" />
      </I></Slot>
      <Sep />
      <Grip w="w-[8px]" />
      <Slot w="w-[29px]"><I>{AX}<path d="M9 11V5M9 11H11M7 5H9" stroke="#1a9a2a" strokeWidth="1.4" fill="none" /></I></Slot>
      <Slot w="w-[26px]" pressed><I>{AX}<path d="M10 2V13" stroke="#333" /><rect x="8" y="4" width="4" height="7" fill="#35c83a" stroke="#1a7a20" /></I></Slot>
      <Slot w="w-[30px]"><I>{AX}<path d="M5 11L9 6L12 7L16 11" stroke="#2a9a4a" strokeWidth="1.2" fill="none" /></I></Slot>
      <div className="w-[2px] shrink-0" />
      <Sep />
      <Slot w="w-[32px]"><I>
        <circle cx="7" cy="7" r="5.5" fill="#d8ecfa" stroke="#2a7ac0" strokeWidth="1.4" /><path d="M4 7H10M7 4V10" stroke="#2a6ab0" strokeWidth="1.6" /><path d="M11 11L16 16" stroke="#d8a830" strokeWidth="2.6" />
      </I></Slot>
      <Slot w="w-[26px]"><I>
        <circle cx="7" cy="7" r="5.5" fill="#d8ecfa" stroke="#2a7ac0" strokeWidth="1.4" /><path d="M4 7H10" stroke="#2a6ab0" strokeWidth="1.6" /><path d="M11 11L16 16" stroke="#d8a830" strokeWidth="2.6" />
      </I></Slot>
      <div className="w-[5px] shrink-0" />
      <Sep />
      <Slot w="w-[33px]"><I>{AX}<path d="M9 4V11L13 7.5Z" fill="#35c83a" stroke="#1a7a20" strokeWidth="0.6" /></I></Slot>
      <Slot w="w-[25px]" pressed><I>{AX}<path d="M10 2V13" stroke="#1a4ab0" /><path d="M16 7.5H12M12 5.5V9.5L10.5 7.5Z" stroke="#d8302a" fill="#d8302a" /></I></Slot>
      <div className="w-[5px] shrink-0" />
      <Sep />
      <Slot w="w-[30px]"><div className="ml-[4px]"><I s={20}>
        <rect x="1.5" y="2.5" width="15" height="13" fill="#fff" stroke="#2a6fb0" /><rect x="1.5" y="2.5" width="15" height="3" fill="#2a7ac8" />
        <path d="M3 8L6 7L9 8.5L12 7L15 8" stroke="#b8302a" fill="none" /><path d="M3 12L6 10L9 12L12 10L15 12" stroke="#2a9a3a" fill="none" />
      </I></div></Slot>
      <Slot w="w-[6px]"><Caret /></Slot>
      <div className="w-[6px] shrink-0" />
      <Sep />
      <Grip w="w-[8px]" />
      <Slot w="w-[25px]" pressed><I><path d="M5 2V15L8 12L10.5 17L13 16L10.5 11H15Z" fill="#444" /></I></Slot>
      <Slot w="w-[32px]"><I><path d="M9 2V7M9 11V16M2 9H7M11 9H16" stroke="#444" /></I></Slot>
      <Sep />
      <div className="w-[4px] shrink-0" />
      <Slot w="w-[28.4px]"><I><path d="M9 2V16" stroke="#555" /></I></Slot>
      <Slot w="w-[28.4px]"><I><path d="M2 9H16" stroke="#555" strokeWidth="1.4" /></I></Slot>
      <Slot w="w-[28.4px]"><I><path d="M3 15L15 3" stroke="#555" /></I></Slot>
      <Slot w="w-[28.4px]"><I><path d="M1 12L9 3M4 14L12 5M7 15L15 6M3 7L11 15M6 5L13 12" stroke="#444" strokeWidth="0.8" strokeDasharray="1.5 1" /><text x="12.5" y="17.5" fontSize="7" fill="#444" style={SANS}>E</text></I></Slot>
      <Slot w="w-[28.4px]"><I><path d="M2 3H15M2 5.5H15M2 8H15M2 10.5H15M2 13H10" stroke="#555" strokeDasharray="1 1" /><text x="12" y="17.5" fontSize="7" fill="#444" style={SANS}>F</text></I></Slot>
      <Slot w="w-[28.4px]"><span className="text-[15px] leading-none text-[#555]" style={SANS}>A</span></Slot>
      <Slot w="w-[28.4px]"><I><rect x="2.5" y="2.5" width="13" height="13" fill="none" stroke="#555" strokeDasharray="1.5 1.5" /><text x="5" y="13.5" fontSize="12" fill="#444" style={SANS}>T</text></I></Slot>
      <Slot w="w-[28.4px]"><I><path d="M2 3H15M2 5.5H15M2 8H15" stroke="#555" strokeDasharray="1 1" /><path d="M2 17C4 11 7 10 11 12" stroke="#555" fill="none" /><text x="12" y="17.5" fontSize="7" fill="#444" style={SANS}>F</text></I></Slot>
      <Slot w="w-[28.4px]"><I><ellipse cx="9" cy="9" rx="8" ry="6" fill="#8c8c8c" stroke="#666" /></I></Slot>
      <Slot w="w-[28.4px]"><I><rect x="2.5" y="3.5" width="13" height="11" rx="1" fill="#8c8c8c" stroke="#666" /></I></Slot>
      <Slot w="w-[28.4px]"><I><path d="M2 12L12 2M6 16L16 6" stroke="#777" strokeWidth="1.3" strokeDasharray="3 1" /></I></Slot>
      <Slot w="w-[28.4px]"><I><path d="M2 16L4 9M6 15L8 6M10 12L12 3M1 14H4M5 11H8M9 8H12M12 3L16 2" stroke="#333" strokeWidth="1.1" fill="none" /></I></Slot>
      <Slot w="w-[24px]"><I><path d="M4 2L7 5L4 8L1 5Z" fill="#444" /><path d="M12 9L15 12L12 15L9 12Z" fill="#444" /><path d="M7 5L10 10" stroke="#444" /></I></Slot>
      <Slot w="w-[6px]"><Caret /></Slot>
      <Grip w="w-[11px]" />
      {['M5', 'M15', 'M30', 'H1', 'H4', 'D1', 'W1', 'MN'].map((m) => (
        <Slot key={m} w="w-[28px]" pressed={m === 'M15'}>
          <span className="text-[10px] text-[#333]" style={SANS}>{m}</span>
        </Slot>
      ))}
      <Sep />
      <div className="w-[18px] shrink-0" />
      <Slot w="w-[26px]"><I><circle cx="11" cy="6.5" r="4.5" fill="none" stroke="#2a6ad0" strokeWidth="1.8" /><path d="M8 10L3 16" stroke="#2a6ad0" strokeWidth="2.4" /></I></Slot>
      <div className="relative h-[26px] w-[32px] shrink-0">
        <svg className="absolute left-[4px] top-[9px]" width="16" height="14" viewBox="0 0 16 14"><path d="M2 1H14V9H7L4 13V9H2Z" fill="#ddd" stroke="#bbb" /></svg>
        <div className="absolute left-[9px] top-[2px] flex h-[16px] w-[16px] items-center justify-center rounded-full bg-[#e02a20] text-[11px] font-bold leading-none text-white">1</div>
      </div>
    </div>
  );
}

const MENU = [
  ['File', 'w-[36px]'], ['Visualizza', 'w-[68px]'], ['Inserisci', 'w-[60px]'], ['Grafici', 'w-[52px]'], ['Strumenti', 'w-[70px]'], ['Finestra', 'w-[59px]'], ['Aiuto', 'w-[40px]'],
];
const TABS = [
  ['IT40Cash,H4', 'w-[89px]'], ['IT40Cash,H1', 'w-[88px]'], ['IT40Cash,H1', 'w-[87px]'], ['IT40Cash,Daily', 'w-[100px]'], ['IT40Cash,H1', 'w-[88px]'], ['IT40Cash,H4', 'w-[88px]'],
  ['IT40Cash,H4', 'w-[88px]'], ['IT40Cash,H4', 'w-[88px]'], ['IT40Cash,H4', 'w-[89px]'], ['IT40Cash,Daily', 'w-[99px]'], ['IT40Cash,H1', 'w-[88px]'], ['IT40Cash,H4', 'w-[88px]'], ['IT40Cash,Daily', 'w-[101px]'],
];
const STATUS = ['w-[102px]', 'w-[71px]', 'w-[71px]', 'w-[68px]', 'w-[70px]', 'w-[67px]'];

export default function App() {
  return (
    <div className="h-[754px] w-[1382px] overflow-hidden bg-white pl-[8px] pt-[8px] text-[12px] text-[#111]" style={{ fontFamily: '"Noto Sans", sans-serif' }}>
      <div className="w-[1366px]">
        <div className="flex h-[23px] items-center bg-[#c135af] pl-[8px] text-[white]">
          <div className="flex h-[15px] w-[15px] items-center justify-center rounded-[2px] bg-[#111] text-[7px] font-bold italic leading-none">XM</div>
          <span className="ml-[6px] whitespace-nowrap text-[11.4px]">79044576: XM.COM-Demo 2 - Conto dimostrativo (demo) - Trading Point Of Financial Instruments Ltd - [IT40Cash,M15]</span>
          <div className="ml-auto flex items-center">
            <svg width="46" height="12" viewBox="0 0 46 12"><path d="M0 6.5H11" stroke="#fff" /></svg>
            <svg width="46" height="12" viewBox="0 0 46 12"><rect x="0.5" y="1" width="10" height="10" fill="none" stroke="#fff" /></svg>
            <svg className="mr-[17px]" width="11" height="11" viewBox="0 0 11 11"><path d="M0 0L11 11M11 0L0 11" stroke="#fff" /></svg>
          </div>
        </div>

        <div className="flex h-[21px] items-center border-b-2 border-[#a3a3a3] bg-[#f0f0f0] pl-[5px] text-[11.2px]">
          <div className="mr-[9px] flex w-[14px] items-center">
            <svg width="15" height="16" viewBox="0 0 15 16">
              <rect x="0.5" y="0.5" width="10" height="11" fill="#cfe4f6" stroke="#6a9acb" /><rect x="4.5" y="5.5" width="10" height="10" fill="#fff" stroke="#6a9acb" />
              <path d="M6 11L8 8L10 12L13 8" stroke="#2a6fb0" fill="none" />
            </svg>
          </div>
          {MENU.map(([m, w]) => (
            <span key={m} className={w}>{m}</span>
          ))}
          <div className="ml-auto mr-[1px] flex gap-[2px]">
            {[0, 1, 2].map((i) => (
              <div key={i} className="flex h-[17px] w-[17px] items-center justify-center border border-[#d8d8d8] bg-[#f4f4f4]">
                <svg width="11" height="11" viewBox="0 0 11 11">
                  {i === 0 && <path d="M2 9H8" stroke="#555" strokeWidth="2" />}
                  {i === 1 && <path d="M3.5 1.5H9.5V7M1.5 3.5H7.5V9.5H1.5Z" stroke="#555" fill="none" />}
                  {i === 2 && <path d="M2 2L9 9M9 2L2 9" stroke="#555" strokeWidth="2" />}
                </svg>
              </div>
            ))}
          </div>
        </div>

        <Toolbar />

        <div className="relative flex h-[623px] w-[1365px] flex-col bg-[#a9a9a9] pl-[4px] pt-[3px]" style={SANS}>
          <div className="flex h-[352px] shrink-0">
            <MainChart />
            <Axis cls="justify-between pt-[3px]">
              {PRICES.map((p) => <Tick key={p} t={p} />)}
              <div className="absolute left-[1px] top-[194px] flex h-[16px] w-[33px] items-center justify-center bg-[#222] text-[#eee]">34507</div>
            </Axis>
          </div>
          <div className="mt-[1px] flex h-[8px] shrink-0"><Plot y0={435} h={8} /></div>
          <div className="flex h-[9px] shrink-0"><Plot y0={443} h={9} /></div>
          <div className="flex h-[105px] shrink-0">
            <DidiPanel />
            <Axis cls="justify-between py-[1px]">
              <Tick t="1.5719" />
              <div className="ml-[1px] flex h-[10px] w-[7px] items-center justify-center bg-black text-[#c8a060]">0</div>
              <div className="border-b border-dashed border-black"><Tick t="1.5484" /></div>
            </Axis>
          </div>
          <div className="mt-[1px] flex h-[91px] shrink-0">
            <OsobPanel />
            <Axis cls="justify-between py-[1px]">
              <Tick t="1.6" />
              <div className="relative top-[2px] ml-[1px] flex h-[10px] w-[7px] items-center justify-center bg-black text-[#c8a060]">0</div>
              <div className="border-b border-dashed border-black"><Tick t="0.9577" /></div>
            </Axis>
          </div>
          <div className="mt-[1px] flex h-[17px] shrink-0">
            <Plot y0={650} h={17}>
              <TrendRow segs={seg1} y={651} />
              <TrendRow segs={seg2} y={659} />
              <text x="18" y="661" fontSize="10" fill="#333" fillOpacity="0.8" textLength="361" xmlSpace="preserve" shapeRendering="auto">M15 trend direction &amp; forex hints (4) 1.0000  M15 trend direction &amp; forex hints (2) 1.0000</text>
            </Plot>
            <Axis cls="pl-[5px]">
              <span>0.00</span>
              <span className="absolute left-[7px] top-[4px]">2.5</span>
            </Axis>
          </div>
          <div className="mt-[1px] flex h-[13px] shrink-0">
            <Plot y0={668} h={13}>
              <rect x="13" y="671" width="1074" height="5" fill="#000" />
              <rect x="13" y="673" width="1074" height="1.2" fill="#fff" />
              {[94, 624, 661, 766, 911].map((x) => <Chevron key={x} x={x} />)}
              <rect x="74" y="668" width="8" height="3" fill="#000" />
              <rect x="273" y="676" width="8" height="4" fill="#000" />
              <rect x="1053" y="676" width="8" height="4" fill="#000" />
              <circle cx="1088" cy="673" r="3" fill="#000" />
              <text x="13" y="680" fontSize="7" fill="#333" textLength="117" shapeRendering="auto">Arrow 0.0000 Input -90.0000</text>
            </Plot>
            <Axis cls="pl-[5px]">
              <span className="leading-[12px]">0.00</span>
              <span className="absolute left-[7px] top-0">000</span>
            </Axis>
          </div>
          <div className="flex h-[20px] shrink-0 text-[10px] tracking-[-0.2px] text-[#222]">
            {TIMES.map((t) => (
              <div key={t} className="flex w-[64px] shrink-0 flex-col">
                <div className="h-[3px] w-px bg-[#333]" />
                <span className="mt-[1px] whitespace-nowrap leading-[12px]">{t}</span>
              </div>
            ))}
          </div>
          <Dialog />
        </div>

        <div className="flex h-[21px] items-stretch border-t-2 border-black bg-[#f0f0f0] pl-[2px] text-[11.2px] text-[#777]">
          <div className="mr-[2px] w-px shrink-0 bg-black" />
          <div className="flex w-[97px] shrink-0 items-center border-x border-b border-black bg-white pl-[11px] text-[#111]">IT40Cash,M15</div>
          {TABS.map(([t, w], i) => (
            <div key={i} className={`flex shrink-0 items-center ${w}`}>
              <span className="ml-[10px] flex-1 whitespace-nowrap">{t}</span>
              <span className="h-[14px] w-px bg-[#999]" />
            </div>
          ))}
          <div className="flex w-[46px] shrink-0 items-center overflow-hidden pl-[10px]"><span className="whitespace-nowrap">IT40Ca</span></div>
          <div className="flex shrink-0 items-center gap-[14px] pl-[3px]">
            <svg width="5" height="9" viewBox="0 0 5 9"><path d="M5 0V9L0 4.5Z" fill="#777" /></svg>
            <svg width="5" height="9" viewBox="0 0 5 9"><path d="M0 0V9L5 4.5Z" fill="#111" /></svg>
          </div>
        </div>

        <div className="flex h-[23px] items-center bg-[#f0f0f0] text-[11.2px]">
          <span className="w-[673px] shrink-0 pl-[2px]">Per aiuto, premi F1</span>
          <div className="h-[18px] w-[115px] shrink-0 border-l border-[#aaa] pl-[4px]">Default</div>
          {STATUS.map((w, i) => (
            <div key={i} className={`h-[18px] shrink-0 border-l border-[#aaa] ${w}`} />
          ))}
          <div className="flex h-[18px] flex-1 items-center border-l border-[#aaa] pl-[5px]">
            <svg width="22" height="16" viewBox="0 0 22 16">
              {[0, 3, 6, 9, 12, 15, 18].map((x, i) => (
                <g key={x}>
                  <rect x={x} y={9 - i} width="2" height={i + 3} fill="#7a8a10" />
                  <rect x={x} y="10" width="2" height="6" fill="#1a4a6a" />
                </g>
              ))}
            </svg>
            <span className="ml-[5px]">1147/3 kb</span>
            <svg className="ml-auto mr-[1px]" width="12" height="12" viewBox="0 0 12 12"><path d="M11 1L1 11M11 5L5 11M11 9L9 11" stroke="#aaa" /></svg>
          </div>
        </div>

        <div className="flex h-[8px]">
          <div className="w-[318px] bg-[#dcd9e4]" />
          <div className="w-[34px] bg-[#eeeef2]" />
          <div className="flex-1 bg-[#d6d8e6]" />
        </div>
      </div>
    </div>
  );
}
